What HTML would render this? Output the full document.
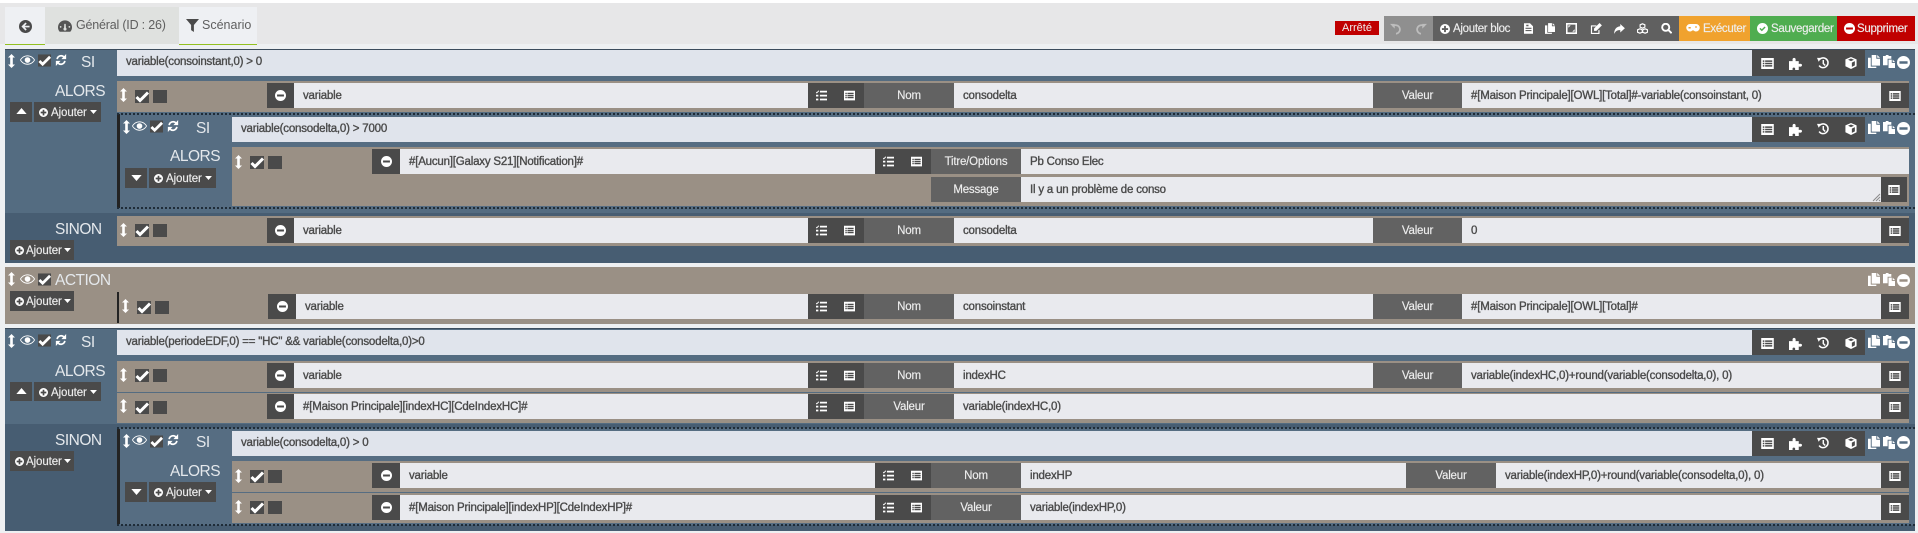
<!DOCTYPE html>
<html lang="fr"><head><meta charset="utf-8"><title>Scénario</title>
<style>
html,body{margin:0;padding:0;width:1918px;height:533px;overflow:hidden;background:#eef0f2;font-family:"Liberation Sans",sans-serif}
div,svg,span{position:absolute;box-sizing:border-box}
svg{fill:#fff;overflow:visible}
.r{left:0;width:0;height:25px}
.r>div{top:0;height:25px}
.i{background:#e9eaee;color:#4a4a4a;padding-left:9px;line-height:27px;font-size:11.5px;letter-spacing:-.2px;-webkit-text-stroke:.35px #4a4a4a;white-space:nowrap}
.c{background:#e0e4ec;color:#4a4a4a;padding-left:9px;line-height:25px;font-size:11.5px;letter-spacing:-.2px;-webkit-text-stroke:.35px #4a4a4a;white-space:nowrap;height:25px;top:0}
.l{background:#626262;color:#eee;text-align:center;line-height:26px;font-size:11.5px;letter-spacing:-.2px;-webkit-text-stroke:.15px #eee;white-space:nowrap}
.d{background:#4a4a4a}
.tan{background:#9a9085}
.w{color:#e4e8ec;font-size:15.5px;letter-spacing:-.5px;line-height:18px;margin-top:1px;white-space:nowrap}
.b{background:#4a4a4a;color:#eee;font-size:11.5px;height:20px;line-height:22px;letter-spacing:-.1px;-webkit-text-stroke:.15px #eee;white-space:nowrap}
.dot{height:0;border-top:2px dotted #1f2c38}
.top{color:#eee;font-size:11.5px;letter-spacing:-.3px;-webkit-text-stroke:.15px #eee;line-height:26px;white-space:nowrap;top:16px;height:25px}
</style></head><body>
<svg width="0" height="0" style="left:0;top:0"><defs>
<symbol id="ud" viewBox="0 0 8 16"><path d="M4 0L8 4H5.500V12H8L4 16 0 12H2.500V4H0z"/></symbol>
<symbol id="eye" viewBox="0 0 16 10"><path fill-rule="evenodd" d="M8 0C4.500 0 1.500 2 0 5c1.500 3 4.500 5 8 5s6.500-2 8-5C14.500 2 11.500 0 8 0zM8 1c3 0 5.500 1.600 7 4-1.500 2.400-4 4-7 4S2.500 7.400 1 5c1.500-2.400 4-4 7-4zM8 2a3 3 0 100 6 3 3 0 000-6z"/></symbol>
<symbol id="ck" viewBox="0 0 14 13"><rect width="14" height="13" fill="#4a4a4a"/><path d="M1.500 7l3.500 3.500L13 2.500" fill="none" stroke="#fff" stroke-width="3"/></symbol>
<symbol id="sq" viewBox="0 0 14 13"><rect width="14" height="13" fill="#4a4a4a"/></symbol>
<symbol id="rf" viewBox="0 0 14 14"><path d="M2.500 6A4.700 4.700 0 0 1 10.500 3.500M11.500 8A4.700 4.700 0 0 1 3.500 10.500" fill="none" stroke="#fff" stroke-width="2"/><path d="M13 0v6H7.500zM1 14V8h5.500z"/></symbol>
<symbol id="mn" viewBox="0 0 16 16"><path fill-rule="evenodd" d="M8 0a8 8 0 100 16A8 8 0 008 0zM3 6.500h10v3H3z"/></symbol>
<symbol id="pl" viewBox="0 0 16 16"><path fill-rule="evenodd" d="M8 0a8 8 0 100 16A8 8 0 008 0zM6.500 3h3v3.500H13v3H9.500V13h-3V9.500H3v-3h3.500z"/></symbol>
<symbol id="la" viewBox="0 0 16 14"><path fill-rule="evenodd" d="M0 0h16v14H0zM2 3v2h2V3zM5 3v2h9V3zM2 6v2h2V6zM5 6v2h9V6zM2 9v2h2V9zM5 9v2h9V9z"/></symbol>
<symbol id="ts" viewBox="0 0 14 14"><path d="M5 1h9v2.200H5zM5 6h9v2.200H5zM5 11h9v2.200H5zM0 2l1 1L3 .500 4 1.500 1 4.500-.500 3zM0 6h3v2.200H0zM0 11h3v2.200H0z"/></symbol>
<symbol id="pz" viewBox="0 0 14 14"><path d="M0 4.500h4C3.700 3.500 3.500 1 5.500 1s1.800 2.500 1.500 3.500h3.500V7.500c1-.4 3.500-.6 3.500 1.300s-2.500 1.800-3.500 1.400V14H6.500c.3-1 .4-2.500-1.300-2.500S3.700 13 4 14H0z"/></symbol>
<symbol id="hs" viewBox="0 0 14 14"><path d="M3 2.800A5.700 5.700 0 1 1 2.500 10" fill="none" stroke="#fff" stroke-width="1.800"/><path d="M0 1l5 0-3 4.500zM6.500 3.500h1.700v3.800l2 2-1.200 1.200-2.500-2.500z"/></symbol>
<symbol id="cb" viewBox="0 0 14 14"><path fill-rule="evenodd" d="M7 0l6.500 2.800v8L7 14 .5 10.800v-8zM7 1.800L3.500 3.200 7 4.800l3.500-1.600zM8 6.500v5l3.500-1.700v-5z"/></symbol>
<symbol id="cp" viewBox="0 0 13 14"><path d="M4 0h5v4h4v7.500H4zM10 0l3 3h-3zM0 3h3v9.500h6V14H0z"/></symbol>
<symbol id="ps" viewBox="0 0 13 14"><path d="M0 1h3V0h3v1h3v3H5v7H0zM6 5h3.500v3.500H13V14H6zM10.500 5L13 7.500h-2.500z"/></symbol>
<symbol id="dn" viewBox="0 0 12 7"><path d="M0 0h12L6 7z"/></symbol>
<symbol id="upc" viewBox="0 0 12 7"><path d="M6 0l6 7H0z"/></symbol>
<symbol id="un" viewBox="0 0 14 14"><path d="M3 4A5 5 0 1 1 7 12.500" fill="none" stroke="#bdbdbd" stroke-width="2"/><path d="M0 1h5.500v5.500z" fill="#bdbdbd"/></symbol>
<symbol id="re" viewBox="0 0 14 14"><path d="M11 4A5 5 0 1 0 7 12.500" fill="none" stroke="#bdbdbd" stroke-width="2"/><path d="M14 1H8.500v5.500z" fill="#bdbdbd"/></symbol>
<symbol id="fl" viewBox="0 0 12 14"><path fill-rule="evenodd" d="M0 0h8l4 4v10H0zM2 6v1.500h8V6zM2 9v1.500h8V9zM3 2v2h3V2z"/></symbol>
<symbol id="ex" viewBox="0 0 14 14"><path fill-rule="evenodd" d="M0 0h14v14H0zM2 2v10h10V2zM3 3h3L3 6zM11 11H8l3-3z"/></symbol>
<symbol id="ed" viewBox="0 0 15 14"><path d="M1 3h7v1.500H2.500v8h8V9H12v5H1z"/><path d="M12 0l3 3-7 7H5V7z"/></symbol>
<symbol id="sh" viewBox="0 0 14 13"><path d="M8 0l6 5.500L8 11V8C4 8 2 9 0 13 0 7 3 3.500 8 3z"/></symbol>
<symbol id="cs" viewBox="0 0 14 14"><path d="M7 1l3 1.300v3L7 6.600 4 5.300v-3zM3.700 7.400l3 1.300v3l-3 1.300-3-1.300v-3zM10.300 7.400l3 1.300v3l-3 1.300-3-1.300v-3z" fill="none" stroke="#fff" stroke-width="1.500"/></symbol>
<symbol id="se" viewBox="0 0 14 14"><path d="M6 1a4.500 4.500 0 100 9 4.500 4.500 0 000-9zM9.500 9l4 4" fill="none" stroke="#fff" stroke-width="2.400"/></symbol>
<symbol id="gp" viewBox="0 0 18 12"><path fill-rule="evenodd" d="M5 0h8a5 5 0 010 10c-2 0-2.500-1.500-4-1.500S7 10 5 10A5 5 0 015 0zM3 4v2h3V4zM12 3v2h2V3z"/></symbol>
<symbol id="cc" viewBox="0 0 16 16"><path fill-rule="evenodd" d="M8 0a8 8 0 100 16A8 8 0 008 0zM3.500 8.500L5 7l2 2 4-4 1.500 1.500L7 12z"/></symbol>
<symbol id="bk" viewBox="0 0 16 16"><path fill-rule="evenodd" d="M8 0a8 8 0 100 16A8 8 0 008 0zM8 3l1.500 1.500L7 7h6v2H7l2.500 2.500L8 13 3 8z" fill="#4a4a4a"/></symbol>
<symbol id="gg" viewBox="0 0 16 13"><path fill-rule="evenodd" d="M8 0a8 8 0 018 8c0 2-.7 3.700-2 5H2C.7 11.700 0 10 0 8a8 8 0 018-8zM7.200 4l-.2 4.500A1.800 1.800 0 109 8.500L8.800 4zM3 6.500a1 1 0 100 2 1 1 0 000-2zM13 6.500a1 1 0 100 2 1 1 0 000-2z" fill="#555"/></symbol>
<symbol id="fi" viewBox="0 0 14 14"><path d="M0 0h14L8.500 6.500V14l-3-2V6.500z" fill="#4a4a4a"/></symbol>
</defs></svg>

<!-- top bar -->
<div style="left:0;top:0;width:1918px;height:3px;background:#fff"></div>
<div style="left:0;top:3px;width:1918px;height:41px;background:#e7e7e8"></div>
<div style="left:5px;top:7px;width:40px;height:38px;background:#eef0f3;border-bottom:1px solid #93c01f"><svg width="13" height="13" style="left:14px;top:13px"><use href="#bk"/></svg></div>
<div style="left:45px;top:7px;width:134px;height:37px;background:#dfe1df"><svg width="14" height="12" style="left:13px;top:13px"><use href="#gg"/></svg><span style="left:31px;top:11px;font-size:12.5px;letter-spacing:-.2px;color:#5f5f5f;white-space:nowrap">Général (ID : 26)</span></div>
<div style="left:179px;top:7px;width:78px;height:38px;background:#eef0f3;border-bottom:1px solid #93c01f"><svg width="13" height="13" style="left:7px;top:12px"><use href="#fi"/></svg><span style="left:23px;top:11px;font-size:12.5px;color:#5f5f5f;white-space:nowrap">Scénario</span></div>

<div style="left:1335px;top:21px;width:44px;height:14px;background:#c00000;color:#eee;font-size:11px;line-height:15px;text-align:center">Arrêté</div>
<div style="left:1384px;top:16px;width:49px;height:25px;background:#8f8f8f"><svg width="12" height="12" style="left:6px;top:7px"><use href="#un"/></svg><svg width="12" height="12" style="left:31px;top:7px"><use href="#re"/></svg></div>
<div style="left:1433px;top:16px;width:246px;height:25px;background:#606060"></div>
<svg width="10" height="10" style="left:1440px;top:24px"><use href="#pl"/></svg>
<div class="top" style="left:1453px">Ajouter bloc</div>
<svg width="9" height="11" style="left:1524px;top:23px"><use href="#fl"/></svg>
<svg width="10" height="11" style="left:1545px;top:23px"><use href="#cp"/></svg>
<svg width="11" height="11" style="left:1566px;top:23px"><use href="#ex"/></svg>
<svg width="12" height="11" style="left:1590px;top:23px"><use href="#ed"/></svg>
<svg width="11" height="10" style="left:1614px;top:24px"><use href="#sh"/></svg>
<svg width="11" height="11" style="left:1637px;top:23px"><use href="#cs"/></svg>
<svg width="11" height="11" style="left:1661px;top:23px"><use href="#se"/></svg>
<div style="left:1679px;top:16px;width:71px;height:25px;background:#f0a22e"><svg width="14" height="9" style="left:7px;top:8px"><use href="#gp"/></svg></div>
<div class="top" style="left:1703px">Exécuter</div>
<div style="left:1750px;top:16px;width:87px;height:25px;background:#4fad50"><svg width="11" height="11" style="left:7px;top:7px"><use href="#cc"/></svg></div>
<div class="top" style="left:1771px">Sauvegarder</div>
<div style="left:1837px;top:16px;width:78px;height:25px;background:#c00000"><svg width="11" height="11" style="left:7px;top:7px"><use href="#mn"/></svg></div>
<div class="top" style="left:1857px">Supprimer</div>

<!-- BLOCK 1 -->
<div style="left:5px;top:49px;width:1910px;height:164px;background:#546c81;border-top:1px solid #3c4c5c"></div>
<div style="left:5px;top:213px;width:1910px;height:50px;background:#475d72"></div>
<svg width="7" height="14" style="left:8px;top:54px"><use href="#ud"/></svg><svg width="15" height="10" style="left:20px;top:55px"><use href="#eye"/></svg><svg width="13" height="13" style="left:38px;top:54px"><use href="#ck"/></svg><svg width="12" height="12" style="left:55px;top:54px"><use href="#rf"/></svg>
<div class="w" style="left:81px;top:53px">SI</div>
<div class="c" style="left:117px;top:50px;width:1635px;height:26px;line-height:25px">variable(consoinstant,0) &gt; 0</div>
<div class="d" style="left:1752px;top:50px;width:113px;height:26px"></div>
<svg width="13" height="11" style="left:1761px;top:58px"><use href="#la"/></svg><svg width="13" height="13" style="left:1789px;top:57px"><use href="#pz"/></svg><svg width="12" height="12" style="left:1817px;top:57px"><use href="#hs"/></svg><svg width="12" height="12" style="left:1845px;top:57px"><use href="#cb"/></svg>
<svg width="12" height="13" style="left:1868px;top:55px"><use href="#cp"/></svg><svg width="12" height="13" style="left:1883px;top:55px"><use href="#ps"/></svg><svg width="13" height="13" style="left:1897px;top:56px"><use href="#mn"/></svg>
<div class="w" style="left:55px;top:82px">ALORS</div>
<div class="b" style="left:10px;top:102px;width:22px"><svg width="11" height="6" style="left:6px;top:6px"><use href="#upc"/></svg></div>
<div class="b" style="left:34px;top:102px;width:67px;padding-left:17px"><svg width="9" height="9" style="left:5px;top:6px"><use href="#pl"/></svg>Ajouter<svg width="7" height="4" style="left:56px;top:8px"><use href="#dn"/></svg></div>

<!-- row -->
<div class="tan" style="left:117px;top:81px;width:1792px;height:31px"></div>
<svg width="7" height="14" style="left:120px;top:88px"><use href="#ud"/></svg><svg width="14" height="13" style="left:135px;top:90px"><use href="#ck"/></svg><svg width="14" height="13" style="left:153px;top:90px"><use href="#sq"/></svg>
<div class="r" style="top:83px">
<div class="d" style="left:267px;width:27px"><svg width="11" height="11" style="left:8px;top:7px"><use href="#mn"/></svg></div>
<div class="i" style="left:294px;width:514px">variable</div>
<div class="d" style="left:808px;width:56px"><svg width="11" height="11" style="left:8px;top:7px"><use href="#ts"/></svg><svg width="11" height="11" style="left:36px;top:7px"><use href="#la"/></svg></div>
<div class="l" style="left:864px;width:90px">Nom</div>
<div class="i" style="left:954px;width:419px">consodelta</div>
<div class="l" style="left:1373px;width:89px">Valeur</div>
<div class="i" style="left:1462px;width:419px">#[Maison Principale][OWL][Total]#-variable(consoinstant, 0)</div>
<div class="d" style="left:1881px;width:28px"><svg width="12" height="10" style="left:8px;top:8px"><use href="#la"/></svg></div>
</div>

<!-- nested SI 1 -->
<div style="left:120px;top:114px;width:1795px;height:94px;background:#566d82"></div>
<div style="left:117px;top:114px;width:3px;height:94px;background:#232323"></div>
<div class="dot" style="left:117px;top:113px;width:1798px"></div>
<div class="dot" style="left:117px;top:207px;width:1798px"></div>
<svg width="7" height="14" style="left:123px;top:120px"><use href="#ud"/></svg><svg width="15" height="10" style="left:132px;top:121px"><use href="#eye"/></svg><svg width="13" height="13" style="left:150px;top:120px"><use href="#ck"/></svg><svg width="12" height="12" style="left:167px;top:120px"><use href="#rf"/></svg>
<div class="w" style="left:196px;top:119px">SI</div>
<div class="c" style="left:232px;top:117px;width:1520px">variable(consodelta,0) &gt; 7000</div>
<div class="d" style="left:1752px;top:117px;width:113px;height:25px"></div>
<svg width="13" height="11" style="left:1761px;top:124px"><use href="#la"/></svg><svg width="13" height="13" style="left:1789px;top:123px"><use href="#pz"/></svg><svg width="12" height="12" style="left:1817px;top:123px"><use href="#hs"/></svg><svg width="12" height="12" style="left:1845px;top:123px"><use href="#cb"/></svg>
<svg width="12" height="13" style="left:1868px;top:121px"><use href="#cp"/></svg><svg width="12" height="13" style="left:1883px;top:121px"><use href="#ps"/></svg><svg width="13" height="13" style="left:1897px;top:122px"><use href="#mn"/></svg>
<div class="w" style="left:170px;top:147px">ALORS</div>
<div class="b" style="left:125px;top:168px;width:22px"><svg width="11" height="6" style="left:6px;top:7px"><use href="#dn"/></svg></div>
<div class="b" style="left:149px;top:168px;width:67px;padding-left:17px"><svg width="9" height="9" style="left:5px;top:6px"><use href="#pl"/></svg>Ajouter<svg width="7" height="4" style="left:56px;top:8px"><use href="#dn"/></svg></div>
<div class="tan" style="left:232px;top:147px;width:1677px;height:59px"></div>
<svg width="7" height="14" style="left:235px;top:155px"><use href="#ud"/></svg><svg width="14" height="13" style="left:250px;top:156px"><use href="#ck"/></svg><svg width="14" height="13" style="left:268px;top:156px"><use href="#sq"/></svg>
<div class="r" style="top:149px">
<div class="d" style="left:372px;width:28px"><svg width="11" height="11" style="left:9px;top:7px"><use href="#mn"/></svg></div>
<div class="i" style="left:400px;width:475px">#[Aucun][Galaxy S21][Notification]#</div>
<div class="d" style="left:875px;width:56px"><svg width="11" height="11" style="left:8px;top:7px"><use href="#ts"/></svg><svg width="11" height="11" style="left:36px;top:7px"><use href="#la"/></svg></div>
<div class="l" style="left:931px;width:90px">Titre/Options</div>
<div class="i" style="left:1021px;width:888px">Pb Conso Elec</div>
</div>
<div class="r" style="top:177px">
<div class="l" style="left:931px;width:90px">Message</div>
<div class="i" style="left:1021px;width:860px">Il y a un problème de conso</div>
<div class="d" style="left:1881px;width:26px"><svg width="12" height="10" style="left:7px;top:8px"><use href="#la"/></svg></div>
</div>
<svg width="7" height="7" style="left:1873px;top:194px"><path d="M0 7L7 0M3 7L7 3M6 7L7 6" fill="none" stroke="#8a8a8a" stroke-width="1"/></svg>

<!-- SINON 1 -->
<div class="w" style="left:55px;top:220px">SINON</div>
<div class="b" style="left:10px;top:240px;width:64px;padding-left:16px"><svg width="9" height="9" style="left:5px;top:6px"><use href="#pl"/></svg>Ajouter<svg width="7" height="4" style="left:54px;top:8px"><use href="#dn"/></svg></div>
<div class="tan" style="left:117px;top:216px;width:1792px;height:30px"></div>
<svg width="7" height="14" style="left:120px;top:223px"><use href="#ud"/></svg><svg width="14" height="13" style="left:135px;top:224px"><use href="#ck"/></svg><svg width="14" height="13" style="left:153px;top:224px"><use href="#sq"/></svg>
<div class="r" style="top:218px">
<div class="d" style="left:267px;width:27px"><svg width="11" height="11" style="left:8px;top:7px"><use href="#mn"/></svg></div>
<div class="i" style="left:294px;width:514px">variable</div>
<div class="d" style="left:808px;width:56px"><svg width="11" height="11" style="left:8px;top:7px"><use href="#ts"/></svg><svg width="11" height="11" style="left:36px;top:7px"><use href="#la"/></svg></div>
<div class="l" style="left:864px;width:90px">Nom</div>
<div class="i" style="left:954px;width:419px">consodelta</div>
<div class="l" style="left:1373px;width:89px">Valeur</div>
<div class="i" style="left:1462px;width:419px">0</div>
<div class="d" style="left:1881px;width:28px"><svg width="12" height="10" style="left:8px;top:8px"><use href="#la"/></svg></div>
</div>

<!-- ACTION -->
<div class="tan" style="left:5px;top:267px;width:1910px;height:57px"></div>
<svg width="7" height="14" style="left:8px;top:272px"><use href="#ud"/></svg><svg width="15" height="10" style="left:20px;top:274px"><use href="#eye"/></svg><svg width="13" height="13" style="left:38px;top:273px"><use href="#ck"/></svg>
<div class="w" style="left:55px;top:271px">ACTION</div>
<svg width="12" height="13" style="left:1868px;top:273px"><use href="#cp"/></svg><svg width="12" height="13" style="left:1883px;top:273px"><use href="#ps"/></svg><svg width="13" height="13" style="left:1897px;top:274px"><use href="#mn"/></svg>
<div class="b" style="left:10px;top:291px;width:64px;padding-left:16px"><svg width="9" height="9" style="left:5px;top:6px"><use href="#pl"/></svg>Ajouter<svg width="7" height="4" style="left:54px;top:8px"><use href="#dn"/></svg></div>
<div style="left:117px;top:292px;width:2px;height:31px;background:#232323"></div>
<svg width="7" height="14" style="left:122px;top:299px"><use href="#ud"/></svg><svg width="14" height="13" style="left:137px;top:301px"><use href="#ck"/></svg><svg width="14" height="13" style="left:155px;top:301px"><use href="#sq"/></svg>
<div class="r" style="top:294px">
<div class="d" style="left:268px;width:28px"><svg width="11" height="11" style="left:9px;top:7px"><use href="#mn"/></svg></div>
<div class="i" style="left:296px;width:512px">variable</div>
<div class="d" style="left:808px;width:56px"><svg width="11" height="11" style="left:8px;top:7px"><use href="#ts"/></svg><svg width="11" height="11" style="left:36px;top:7px"><use href="#la"/></svg></div>
<div class="l" style="left:864px;width:90px">Nom</div>
<div class="i" style="left:954px;width:419px">consoinstant</div>
<div class="l" style="left:1373px;width:89px">Valeur</div>
<div class="i" style="left:1462px;width:419px">#[Maison Principale][OWL][Total]#</div>
<div class="d" style="left:1881px;width:28px"><svg width="12" height="10" style="left:8px;top:8px"><use href="#la"/></svg></div>
</div>

<!-- BLOCK 3 -->
<div style="left:5px;top:328px;width:1910px;height:96px;background:#546c81;border-top:1px solid #3c4c5c"></div>
<div style="left:5px;top:424px;width:1910px;height:107px;background:#475d72"></div>
<svg width="7" height="14" style="left:8px;top:334px"><use href="#ud"/></svg><svg width="15" height="10" style="left:20px;top:335px"><use href="#eye"/></svg><svg width="13" height="13" style="left:38px;top:334px"><use href="#ck"/></svg><svg width="12" height="12" style="left:55px;top:334px"><use href="#rf"/></svg>
<div class="w" style="left:81px;top:333px">SI</div>
<div class="c" style="left:117px;top:330px;width:1635px">variable(periodeEDF,0) == "HC" &amp;&amp; variable(consodelta,0)&gt;0</div>
<div class="d" style="left:1752px;top:330px;width:113px;height:25px"></div>
<svg width="13" height="11" style="left:1761px;top:338px"><use href="#la"/></svg><svg width="13" height="13" style="left:1789px;top:337px"><use href="#pz"/></svg><svg width="12" height="12" style="left:1817px;top:337px"><use href="#hs"/></svg><svg width="12" height="12" style="left:1845px;top:337px"><use href="#cb"/></svg>
<svg width="12" height="13" style="left:1868px;top:335px"><use href="#cp"/></svg><svg width="12" height="13" style="left:1883px;top:335px"><use href="#ps"/></svg><svg width="13" height="13" style="left:1897px;top:336px"><use href="#mn"/></svg>
<div class="w" style="left:55px;top:362px">ALORS</div>
<div class="b" style="left:10px;top:382px;width:22px;height:19px"><svg width="11" height="6" style="left:6px;top:6px"><use href="#upc"/></svg></div>
<div class="b" style="left:34px;top:382px;width:67px;height:19px;padding-left:17px"><svg width="9" height="9" style="left:5px;top:6px"><use href="#pl"/></svg>Ajouter<svg width="7" height="4" style="left:56px;top:8px"><use href="#dn"/></svg></div>

<div class="tan" style="left:117px;top:361px;width:1792px;height:31px"></div>
<svg width="7" height="14" style="left:120px;top:368px"><use href="#ud"/></svg><svg width="14" height="13" style="left:135px;top:369px"><use href="#ck"/></svg><svg width="14" height="13" style="left:153px;top:369px"><use href="#sq"/></svg>
<div class="r" style="top:363px">
<div class="d" style="left:267px;width:27px"><svg width="11" height="11" style="left:8px;top:7px"><use href="#mn"/></svg></div>
<div class="i" style="left:294px;width:514px">variable</div>
<div class="d" style="left:808px;width:56px"><svg width="11" height="11" style="left:8px;top:7px"><use href="#ts"/></svg><svg width="11" height="11" style="left:36px;top:7px"><use href="#la"/></svg></div>
<div class="l" style="left:864px;width:90px">Nom</div>
<div class="i" style="left:954px;width:419px">indexHC</div>
<div class="l" style="left:1373px;width:89px">Valeur</div>
<div class="i" style="left:1462px;width:419px">variable(indexHC,0)+round(variable(consodelta,0), 0)</div>
<div class="d" style="left:1881px;width:28px"><svg width="12" height="10" style="left:8px;top:8px"><use href="#la"/></svg></div>
</div>
<div class="tan" style="left:117px;top:393px;width:1792px;height:30px"></div>
<svg width="7" height="14" style="left:120px;top:399px"><use href="#ud"/></svg><svg width="14" height="13" style="left:135px;top:401px"><use href="#ck"/></svg><svg width="14" height="13" style="left:153px;top:401px"><use href="#sq"/></svg>
<div class="r" style="top:394px">
<div class="d" style="left:267px;width:27px"><svg width="11" height="11" style="left:8px;top:7px"><use href="#mn"/></svg></div>
<div class="i" style="left:294px;width:514px">#[Maison Principale][indexHC][CdeIndexHC]#</div>
<div class="d" style="left:808px;width:56px"><svg width="11" height="11" style="left:8px;top:7px"><use href="#ts"/></svg><svg width="11" height="11" style="left:36px;top:7px"><use href="#la"/></svg></div>
<div class="l" style="left:864px;width:90px">Valeur</div>
<div class="i" style="left:954px;width:927px">variable(indexHC,0)</div>
<div class="d" style="left:1881px;width:28px"><svg width="12" height="10" style="left:8px;top:8px"><use href="#la"/></svg></div>
</div>

<!-- SINON 3 -->
<div class="w" style="left:55px;top:431px">SINON</div>
<div class="b" style="left:10px;top:451px;width:64px;padding-left:16px"><svg width="9" height="9" style="left:5px;top:6px"><use href="#pl"/></svg>Ajouter<svg width="7" height="4" style="left:54px;top:8px"><use href="#dn"/></svg></div>

<div style="left:120px;top:428px;width:1795px;height:97px;background:#566d82"></div>
<div style="left:117px;top:429px;width:3px;height:95px;background:#232323"></div>
<div class="dot" style="left:117px;top:427px;width:1798px"></div>
<div class="dot" style="left:117px;top:524px;width:1798px"></div>
<svg width="7" height="14" style="left:123px;top:434px"><use href="#ud"/></svg><svg width="15" height="10" style="left:132px;top:435px"><use href="#eye"/></svg><svg width="13" height="13" style="left:150px;top:435px"><use href="#ck"/></svg><svg width="12" height="12" style="left:167px;top:434px"><use href="#rf"/></svg>
<div class="w" style="left:196px;top:433px">SI</div>
<div class="c" style="left:232px;top:431px;width:1520px">variable(consodelta,0) &gt; 0</div>
<div class="d" style="left:1752px;top:431px;width:113px;height:25px"></div>
<svg width="13" height="11" style="left:1761px;top:438px"><use href="#la"/></svg><svg width="13" height="13" style="left:1789px;top:437px"><use href="#pz"/></svg><svg width="12" height="12" style="left:1817px;top:437px"><use href="#hs"/></svg><svg width="12" height="12" style="left:1845px;top:437px"><use href="#cb"/></svg>
<svg width="12" height="13" style="left:1868px;top:436px"><use href="#cp"/></svg><svg width="12" height="13" style="left:1883px;top:436px"><use href="#ps"/></svg><svg width="13" height="13" style="left:1897px;top:436px"><use href="#mn"/></svg>
<div class="w" style="left:170px;top:462px">ALORS</div>
<div class="b" style="left:125px;top:482px;width:22px"><svg width="11" height="6" style="left:6px;top:7px"><use href="#dn"/></svg></div>
<div class="b" style="left:149px;top:482px;width:67px;padding-left:17px"><svg width="9" height="9" style="left:5px;top:6px"><use href="#pl"/></svg>Ajouter<svg width="7" height="4" style="left:56px;top:8px"><use href="#dn"/></svg></div>

<div class="tan" style="left:232px;top:461px;width:1677px;height:31px"></div>
<svg width="7" height="14" style="left:235px;top:469px"><use href="#ud"/></svg><svg width="14" height="13" style="left:250px;top:470px"><use href="#ck"/></svg><svg width="14" height="13" style="left:268px;top:470px"><use href="#sq"/></svg>
<div class="r" style="top:463px">
<div class="d" style="left:372px;width:28px"><svg width="11" height="11" style="left:9px;top:7px"><use href="#mn"/></svg></div>
<div class="i" style="left:400px;width:475px">variable</div>
<div class="d" style="left:875px;width:56px"><svg width="11" height="11" style="left:8px;top:7px"><use href="#ts"/></svg><svg width="11" height="11" style="left:36px;top:7px"><use href="#la"/></svg></div>
<div class="l" style="left:931px;width:90px">Nom</div>
<div class="i" style="left:1021px;width:385px">indexHP</div>
<div class="l" style="left:1406px;width:90px">Valeur</div>
<div class="i" style="left:1496px;width:385px">variable(indexHP,0)+round(variable(consodelta,0), 0)</div>
<div class="d" style="left:1881px;width:28px"><svg width="12" height="10" style="left:8px;top:8px"><use href="#la"/></svg></div>
</div>
<div class="tan" style="left:232px;top:493px;width:1677px;height:30px"></div>
<svg width="7" height="14" style="left:235px;top:500px"><use href="#ud"/></svg><svg width="14" height="13" style="left:250px;top:501px"><use href="#ck"/></svg><svg width="14" height="13" style="left:268px;top:501px"><use href="#sq"/></svg>
<div class="r" style="top:495px">
<div class="d" style="left:372px;width:28px"><svg width="11" height="11" style="left:9px;top:7px"><use href="#mn"/></svg></div>
<div class="i" style="left:400px;width:475px">#[Maison Principale][indexHP][CdeIndexHP]#</div>
<div class="d" style="left:875px;width:56px"><svg width="11" height="11" style="left:8px;top:7px"><use href="#ts"/></svg><svg width="11" height="11" style="left:36px;top:7px"><use href="#la"/></svg></div>
<div class="l" style="left:931px;width:90px">Valeur</div>
<div class="i" style="left:1021px;width:860px">variable(indexHP,0)</div>
<div class="d" style="left:1881px;width:28px"><svg width="12" height="10" style="left:8px;top:8px"><use href="#la"/></svg></div>
</div>
</body></html>
